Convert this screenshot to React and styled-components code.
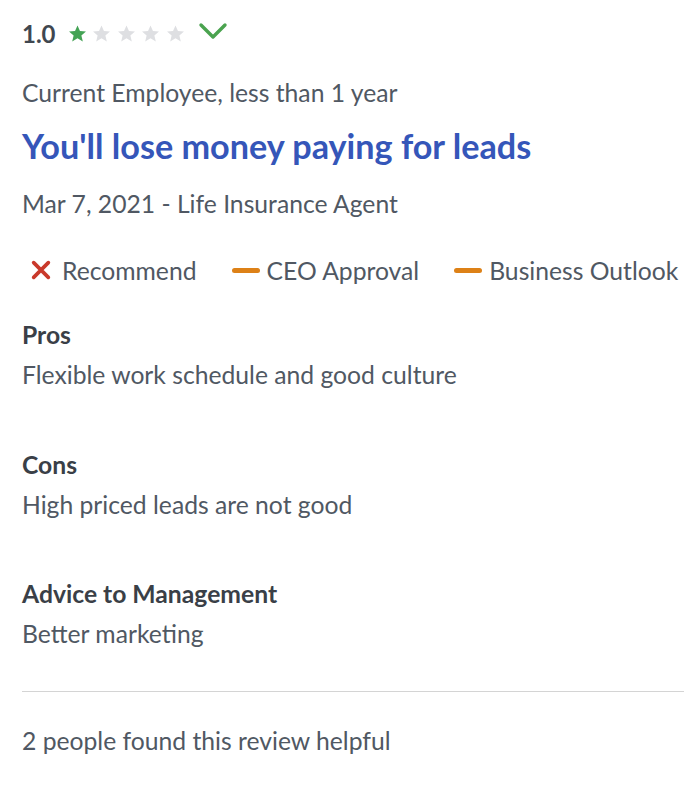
import React from "react";
import styled, { createGlobalStyle } from "styled-components";

const GlobalStyle = createGlobalStyle`
  body {
    margin: 0;
    background: #fff;
    font-family: Lato, "Open Sans", sans-serif;
    color: #505863;
  }
`;

const Review = styled.div`
  padding: 13px 0 40px 22px;
  font-size: 24.7px;
`;

const RatingRow = styled.div`
  display: flex;
  align-items: center;
  height: 40px;
`;

const RatingValue = styled.span`
  font-size: 24px;
  font-weight: 700;
  color: #404750;
  margin-right: 12px;
`;

const Star = styled.svg`
  width: 19px;
  height: 19px;
  margin-right: 5.5px;
  fill: ${props => (props.$on ? "#44a355" : "#dedfe2")};
`;

const Check = styled.svg`
  width: 30px;
  height: 22px;
  margin-left: 8px;
  margin-top: -4px;
`;

const Line = styled.div`
  line-height: 40px;
  margin-top: ${props => props.$mt || 0}px;
`;

const Title = styled.h2`
  margin: 13px 0 0;
  font-size: 34.2px;
  font-weight: 700;
  line-height: 40px;
  color: #3556b9;
`;

const Ratings = styled.div`
  display: flex;
  align-items: center;
  gap: 35px;
  height: 40px;
  margin-top: 26px;
`;

const RatingItem = styled.div`
  display: flex;
  align-items: center;
  gap: 7px;
`;

const Cross = styled.svg`
  margin-left: 8px;
  margin-right: 3px;
`;

const Dash = styled.span`
  display: inline-block;
  width: 28px;
  height: 5px;
  border-radius: 3px;
  background: #dd8117;
`;

const Section = styled.div`
  margin-top: ${props => props.$mt}px;
`;

const Heading = styled.div`
  font-weight: 700;
  color: #3a3f47;
  line-height: 40px;
`;

const Body = styled.div`
  line-height: 39px;
`;

const Divider = styled.hr`
  border: none;
  border-top: 1px solid #d4d4d4;
  margin: 38px 0 0;
`;

const Helpful = styled.div`
  line-height: 40px;
  margin-top: 29px;
`;

const StarIcon = ({ on }) => (
  <Star $on={on} viewBox="0 0 24 24">
    <path d="M12 1.8l3.1 7.1 7.6.6-5.8 5 1.8 7.5L12 18l-6.7 4 1.8-7.5-5.8-5 7.6-.6z" />
  </Star>
);

const sections = [
  { title: "Pros", text: "Flexible work schedule and good culture", mt: 25 },
  { title: "Cons", text: "High priced leads are not good", mt: 51 },
  { title: "Advice to Management", text: "Better marketing", mt: 50 }
];

const App = () => (
  <>
    <GlobalStyle />
    <Review>
      <RatingRow>
        <RatingValue>1.0</RatingValue>
        {[1, 2, 3, 4, 5].map(n => (
          <StarIcon key={n} on={n === 1} />
        ))}
        <Check viewBox="0 0 30 22">
          <path
            d="M3 5l12 12L27 5"
            fill="none"
            stroke="#4aa34f"
            strokeWidth="3.4"
            strokeLinecap="round"
            strokeLinejoin="round"
          />
        </Check>
      </RatingRow>
      <Line $mt={20}>Current Employee, less than 1 year</Line>
      <Title>You'll lose money paying for leads</Title>
      <Line $mt={18}>Mar 7, 2021 - Life Insurance Agent</Line>
      <Ratings>
        <RatingItem>
          <Cross width="22" height="22" viewBox="0 0 24 24">
            <path
              d="M4 4l16 16M20 4L4 20"
              stroke="#c9392b"
              strokeWidth="4"
              strokeLinecap="round"
            />
          </Cross>
          Recommend
        </RatingItem>
        <RatingItem>
          <Dash />
          CEO Approval
        </RatingItem>
        <RatingItem>
          <Dash />
          Business Outlook
        </RatingItem>
      </Ratings>
      {sections.map(s => (
        <Section key={s.title} $mt={s.mt}>
          <Heading>{s.title}</Heading>
          <Body>{s.text}</Body>
        </Section>
      ))}
      <Divider />
      <Helpful>2 people found this review helpful</Helpful>
    </Review>
  </>
);

export default App;
